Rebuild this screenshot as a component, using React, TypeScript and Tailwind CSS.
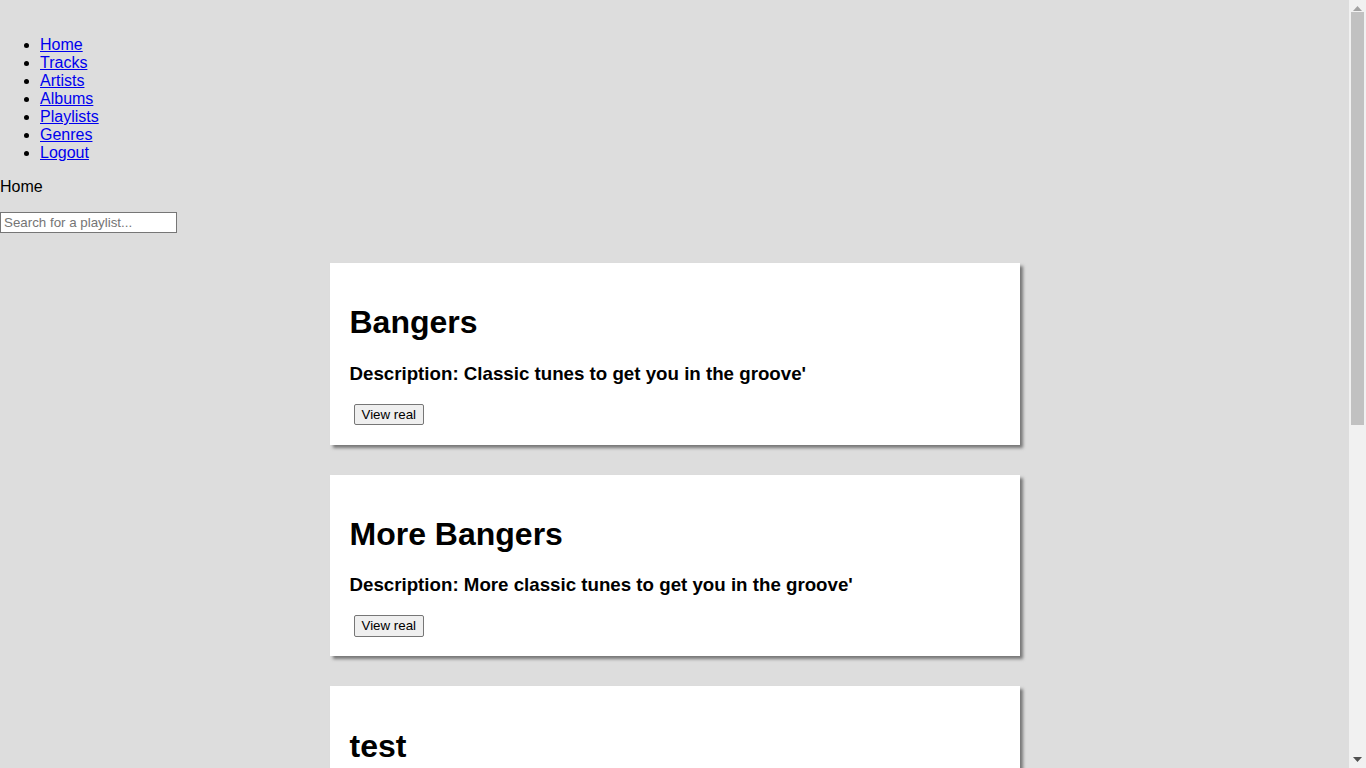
const links = ['Home', 'Tracks', 'Artists', 'Albums', 'Playlists', 'Genres', 'Logout']

const playlists = [
  { name: 'Bangers', description: "Classic tunes to get you in the groove'" },
  { name: 'More Bangers', description: "More classic tunes to get you in the groove'" },
  { name: 'test', description: 'test' },
  { name: 'Chill', description: 'Songs to wind down to' },
  { name: 'Road Trip', description: 'For the long drive' },
]

function PlaylistCard({ name, description }: { name: string; description: string }) {
  return (
    <div className="mx-auto mb-[30px] w-[690px] bg-white px-5 pt-5 pb-[19.5px] shadow-[3px_3px_3px_#777]">
      <h1 className="my-[21.44px] text-[32px] font-bold leading-[37px]">{name}</h1>
      <h3 className="my-[18.72px] text-[18.72px] font-bold leading-[21.5px]">
        Description: {description}
      </h3>
      <button className="ml-1 mt-[0.5px] h-[21.5px] rounded-[2px] border border-[#767676] bg-[#efefef] px-[7px] text-[13.33px] leading-[15px] text-black">
        View real
      </button>
    </div>
  )
}

function Scrollbar() {
  return (
    <div className="flex h-screen w-[17px] shrink-0 flex-col items-center bg-[#f1f1f1]">
      <div className="flex h-[17px] w-full items-center justify-center">
        <svg width="9" height="5" viewBox="0 0 9 5">
          <path d="M0 5 L4.5 0 L9 5 Z" fill="#a3a3a3" />
        </svg>
      </div>
      <div className="mt-[-5px] h-[413px] w-[13px] bg-[#c1c1c1]" />
      <div className="flex-1" />
      <div className="flex h-[17px] w-full items-center justify-center">
        <svg width="9" height="5" viewBox="0 0 9 5">
          <path d="M0 0 L9 0 L4.5 5 Z" fill="#505050" />
        </svg>
      </div>
    </div>
  )
}

export default function App() {
  return (
    <div
      className="flex h-screen overflow-hidden bg-[#dddddd] text-[16px] leading-[18px] text-black"
      style={{ fontFamily: '"Liberation Sans", Arial, sans-serif' }}
    >
      <main className="min-w-0 flex-1">
        <ul className="list-disc pt-[36px] pl-10">
          {links.map((l) => (
            <li key={l}>
              <a href="#" className="text-[#0000ee] underline">
                {l}
              </a>
            </li>
          ))}
        </ul>
        <p className="my-4">Home</p>
        <input
          type="text"
          placeholder="Search for a playlist..."
          className="mb-[30px] block h-[21px] w-[177px] border border-[#767676] bg-white px-[3px] text-[13.33px] placeholder:text-[#757575]"
        />
        {playlists.map((p) => (
          <PlaylistCard key={p.name} {...p} />
        ))}
      </main>
      <Scrollbar />
    </div>
  )
}
